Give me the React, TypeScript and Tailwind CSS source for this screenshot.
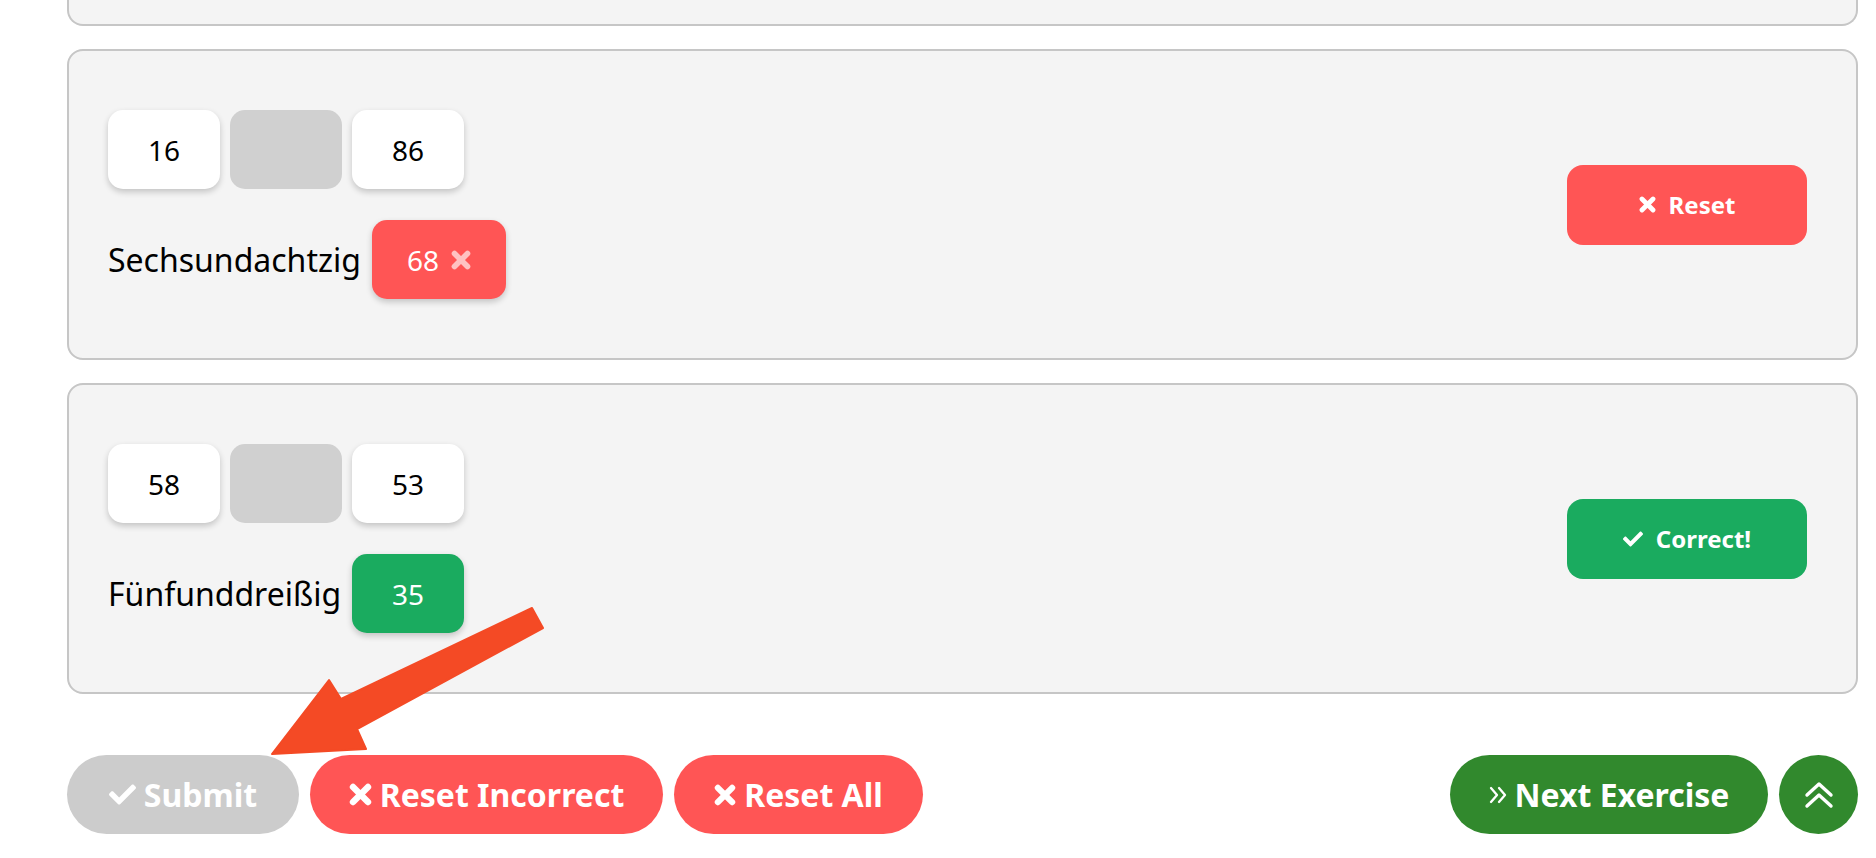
import type { FC, ReactNode } from "react";
import { FaCheck } from "react-icons/fa";

type Exercise = {
  left: string;
  right: string;
  word: string;
  answer: string;
  correct: boolean;
};

const exercises: Exercise[] = [
  { left: "16", right: "86", word: "Sechsundachtzig", answer: "68", correct: false },
  { left: "58", right: "53", word: "Fünfunddreißig", answer: "35", correct: true },
];

// heavy "✖" like the font-awesome one used on the page
const XIcon: FC<{ size: number; className?: string }> = ({ size, className }) => (
  <svg width={size} height={size} viewBox="0 0 20 20" className={className} fill="none" stroke="currentColor" strokeWidth="5.6" strokeLinecap="round">
    <line x1="3.5" y1="3.5" x2="16.5" y2="16.5" />
    <line x1="16.5" y1="3.5" x2="3.5" y2="16.5" />
  </svg>
);

const Tile: FC<{ value?: string }> = ({ value }) =>
  value ? (
    <div className="flex h-[79px] w-[112px] items-center justify-center rounded-[15px] bg-white text-[28px] text-black shadow-[0_3px_6px_rgba(0,0,0,0.2)]">
      {value}
    </div>
  ) : (
    <div className="h-[79px] w-[112px] rounded-[15px] bg-[#d0d0d0]" />
  );

const ChevronsRight = () => (
  <svg width="18" height="20" viewBox="0 0 18 20" fill="none" stroke="currentColor" strokeWidth="2.3" strokeLinecap="round" strokeLinejoin="round">
    <polyline points="2,3 8,10 2,17" />
    <polyline points="10,3 16,10 10,17" />
  </svg>
);

const ChevronsUp = () => (
  <svg width="30" height="28" viewBox="0 0 30 28" fill="none" stroke="currentColor" strokeWidth="3.4" strokeLinecap="round" strokeLinejoin="round">
    <polyline points="3,14 15,3 27,14" />
    <polyline points="3,25 15,14 27,25" />
  </svg>
);

const Pill: FC<{ className: string; icon: ReactNode; children: ReactNode }> = ({ className, icon, children }) => (
  <button className={`flex h-[79px] items-center justify-center gap-[8px] rounded-full text-[32px] font-bold text-white ${className}`}>
    {icon}
    <span>{children}</span>
  </button>
);

const ExerciseCard: FC<{ ex: Exercise }> = ({ ex }) => (
  <div className="flex items-center justify-between rounded-2xl border-2 border-[#c6c6c6] bg-[#f4f4f4] py-[59px] pl-[39px] pr-[49px]">
    <div className="flex flex-col gap-[31px]">
      <div className="flex gap-[10px]">
        <Tile value={ex.left} />
        <Tile />
        <Tile value={ex.right} />
      </div>
      <div className="flex items-center gap-[11px]">
        <span className="text-[32px] text-black">{ex.word}</span>
        {ex.correct ? (
          <div className="flex h-[79px] w-[112px] items-center justify-center rounded-[15px] bg-[#1aab5f] text-[28px] text-white shadow-[0_3px_6px_rgba(0,0,0,0.2)]">
            {ex.answer}
          </div>
        ) : (
          <div className="flex h-[79px] w-[134px] items-center justify-center gap-[12px] rounded-[15px] bg-[#ff5555] text-[28px] text-white shadow-[0_3px_6px_rgba(0,0,0,0.2)]">
            <span>{ex.answer}</span>
            <XIcon size={20} className="text-[#ffc2c2]" />
          </div>
        )}
      </div>
    </div>
    {ex.correct ? (
      <button className="flex h-[80px] w-[240px] items-center justify-center gap-[13px] rounded-2xl bg-[#1aab5f] text-[24px] font-bold text-white">
        <FaCheck size={20} />
        <span>Correct!</span>
      </button>
    ) : (
      <button className="flex h-[80px] w-[240px] items-center justify-center gap-[13px] rounded-2xl bg-[#ff5555] text-[24px] font-bold text-white">
        <XIcon size={17} />
        <span>Reset</span>
      </button>
    )}
  </div>
);

export default function App() {
  return (
    <div className="relative h-[858px] w-full overflow-hidden bg-white pl-[67px] pr-[18px] font-['Noto_Sans',sans-serif]">
      {/* bottom of the previous card, scrolled off the top */}
      <div className="h-[26px] rounded-b-2xl border-x-2 border-b-2 border-[#c6c6c6] bg-[#f4f4f4]" />

      <div className="mt-[23px] flex flex-col gap-[23px]">
        {exercises.map((ex) => (
          <ExerciseCard key={ex.word} ex={ex} />
        ))}
      </div>

      <div className="mt-[61px] flex items-center justify-between">
        <div className="flex items-center gap-[11px]">
          <Pill className="w-[232px] bg-[#cccccc]" icon={<FaCheck size={27} />}>
            Submit
          </Pill>
          <Pill className="w-[353px] bg-[#ff5555]" icon={<XIcon size={23} />}>
            Reset Incorrect
          </Pill>
          <Pill className="w-[249px] bg-[#ff5555]" icon={<XIcon size={22} />}>
            Reset All
          </Pill>
        </div>
        <div className="flex items-center gap-[11px]">
          <Pill className="w-[318px] bg-[#31892d]" icon={<ChevronsRight />}>
            Next Exercise
          </Pill>
          <button className="flex h-[79px] w-[79px] items-center justify-center rounded-full bg-[#31892d] text-white">
            <ChevronsUp />
          </button>
        </div>
      </div>

      {/* annotation arrow pointing at Submit */}
      <svg className="pointer-events-none absolute left-0 top-0" width="1876" height="858">
        <polygon
          points="272,754 329,680 341,699 532,608 543,628 357,729 366,749"
          fill="#f44a25"
          stroke="#f44a25"
          strokeWidth="2"
          strokeLinejoin="round"
        />
      </svg>
    </div>
  );
}
